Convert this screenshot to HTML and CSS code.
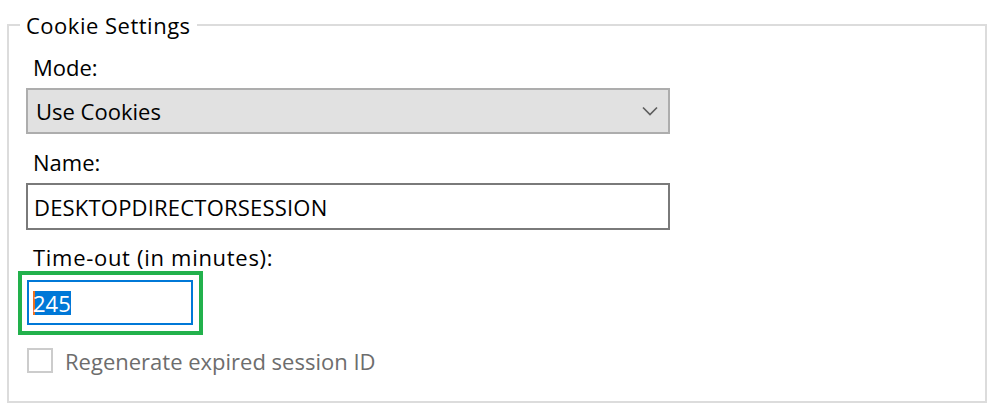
FILE: index.html
```html
<!DOCTYPE html>
<html>
<head>
<meta charset="utf-8">
<link rel="stylesheet" href="styles.css">
</head>
<body>
<div class="group">
  <span class="legend">Cookie Settings</span>
  <div class="label mode-label">Mode:</div>
  <div class="combo">
    <span class="combo-text">Use Cookies</span>
    <svg class="chevron" width="16" height="10" viewBox="0 0 16 10"><path d="M1 1.5 L8 8.5 L15 1.5" fill="none" stroke="#5f5f5f" stroke-width="1.7"/></svg>
  </div>
  <div class="label name-label">Name:</div>
  <div class="textbox name-box">DESKTOPDIRECTORSESSION</div>
  <div class="label timeout-label">Time-out (in minutes):</div>
  <div class="highlight">
    <div class="textbox focused"><span class="sel">245</span></div>
  </div>
  <div class="check-row">
    <span class="checkbox"></span>
    <span class="check-label">Regenerate expired session ID</span>
  </div>
</div>
</body>
</html>
```
FILE: styles.css
```css
html, body {
  margin: 0;
  padding: 0;
  background: #ffffff;
}
body {
  font-family: "Open Sans", "Noto Sans", sans-serif;
  font-size: 22px;
  line-height: 24px;
  color: #000000;
}
.group {
  position: relative;
  box-sizing: border-box;
  margin: 24px 0 0 7px;
  width: 980px;
  height: 379px;
  border: 2px solid #dcdcdc;
  padding: 0 0 0 17px;
  display: flex;
  flex-direction: column;
  align-items: flex-start;
}
.legend {
  position: absolute;
  top: -13px;
  left: 11px;
  padding: 0 6px;
  background: #ffffff;
  white-space: nowrap;
  letter-spacing: 0.5px;
}
.label {
  height: 24px;
  padding-left: 7px;
  white-space: nowrap;
}
.mode-label { margin-top: 29px; }
.combo {
  margin-top: 9px;
  box-sizing: border-box;
  width: 644px;
  height: 46px;
  border: 2px solid #adadad;
  background: #e1e1e1;
  display: flex;
  align-items: center;
  justify-content: space-between;
  padding: 0 10px 0 8px;
}
.combo-text { white-space: nowrap; }
.chevron { display: block; }
.name-label { margin-top: 16px; }
.textbox {
  margin-top: 9px;
  box-sizing: border-box;
  width: 644px;
  height: 47px;
  border: 2px solid #7a7a7a;
  background: #ffffff;
  display: flex;
  align-items: center;
  padding: 0 6px;
  white-space: nowrap;
}
.name-box { letter-spacing: 0.2px; }
.timeout-label {
  margin-top: 15px;
  letter-spacing: 0.7px;
}
.highlight {
  margin: 2px 0 0 -8px;
  border: 4px solid #22b14c;
  padding: 5px 6px 6px 5px;
}
.textbox.focused {
  margin-top: 0;
  width: 166px;
  height: 45px;
  border-color: #0078d7;
  padding: 0 4px;
}
.sel {
  background: #0078d7;
  color: #ffffff;
  box-shadow: inset 2px 0 0 #f0701e;
}
.check-row {
  margin: 13px 0 0 1px;
  display: flex;
  align-items: center;
  gap: 12px;
  height: 25px;
}
.checkbox {
  box-sizing: border-box;
  width: 26px;
  height: 25px;
  border: 2px solid #cccccc;
  background: #ffffff;
}
.check-label {
  color: #6d6d6d;
  white-space: nowrap;
}
```
